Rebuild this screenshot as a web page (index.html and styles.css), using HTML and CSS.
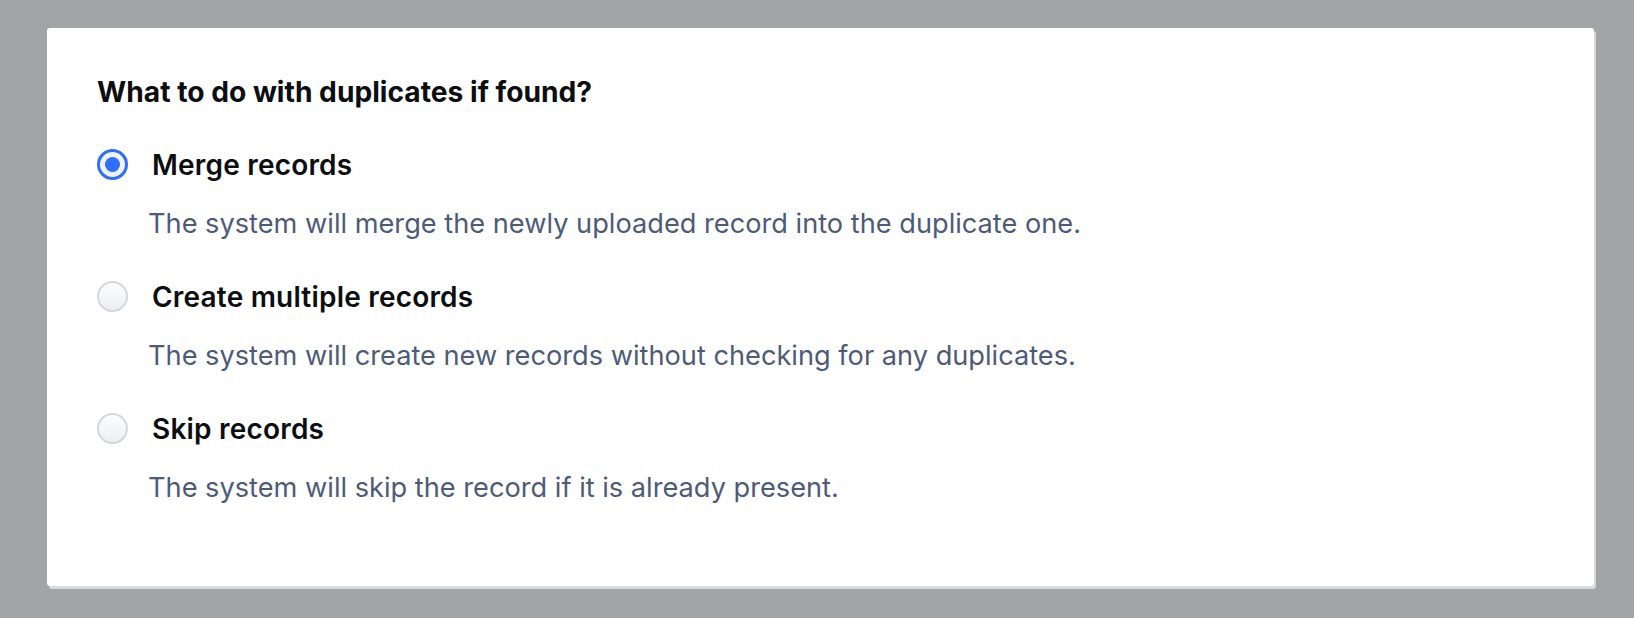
FILE: index.html
```html
<!DOCTYPE html>
<html>
<head>
<meta charset="utf-8">
<link rel="stylesheet" href="styles.css">
</head>
<body>
<div class="card">
  <h2 class="title">What to do with duplicates if found?</h2>
  <div class="options">
    <label class="option">
      <span class="radio checked"><span class="dot"></span></span>
      <span class="label">Merge records</span>
    </label>
    <p class="desc">The system will merge the newly uploaded record into the duplicate one.</p>
    <label class="option">
      <span class="radio"></span>
      <span class="label">Create multiple records</span>
    </label>
    <p class="desc">The system will create new records without checking for any duplicates.</p>
    <label class="option">
      <span class="radio"></span>
      <span class="label">Skip records</span>
    </label>
    <p class="desc">The system will skip the record if it is already present.</p>
  </div>
</div>
</body>
</html>
```
FILE: styles.css
```css
html, body {
  margin: 0;
  padding: 0;
  background: #a3a4a6;
  height: 100%;
}
body {
  padding: 28px 0 0 47px;
  box-sizing: border-box;
  font-family: Inter, "Noto Sans", sans-serif;
}
.card {
  width: 1547px;
  height: 558px;
  background: #ffffff;
  border-radius: 3px;
  box-shadow: 2px 3px 0 #d8d9de;
  box-sizing: border-box;
  padding: 47px 50px 0 50px;
}
.title {
  margin: 0;
  font-size: 28.2px;
  font-weight: 700;
  line-height: 34px;
  color: #0d0e12;
}
.options {
  display: flex;
  flex-direction: column;
  margin-top: 39px;
}
.option {
  display: flex;
  align-items: center;
  gap: 24px;
  height: 34px;
}
.radio {
  width: 31px;
  height: 31px;
  border-radius: 50%;
  box-sizing: border-box;
  border: 2px solid #d5d7de;
  background: linear-gradient(#fdfdfe, #eceef3);
  display: flex;
  align-items: center;
  justify-content: center;
  flex: none;
  position: relative;
  top: -1px;
}
.radio.checked {
  border: 3px solid #2f6ef6;
  background: #eef3fe;
}
.dot {
  width: 15px;
  height: 15px;
  border-radius: 50%;
  background: #2f6ef6;
}
.label {
  font-size: 28px;
  font-weight: 600;
  line-height: 34px;
  letter-spacing: 0.2px;
  color: #0d0e12;
}
.desc {
  margin: 25px 0 39px 51px;
  font-size: 27.2px;
  line-height: 34px;
  color: #4e5b78;
}
```
